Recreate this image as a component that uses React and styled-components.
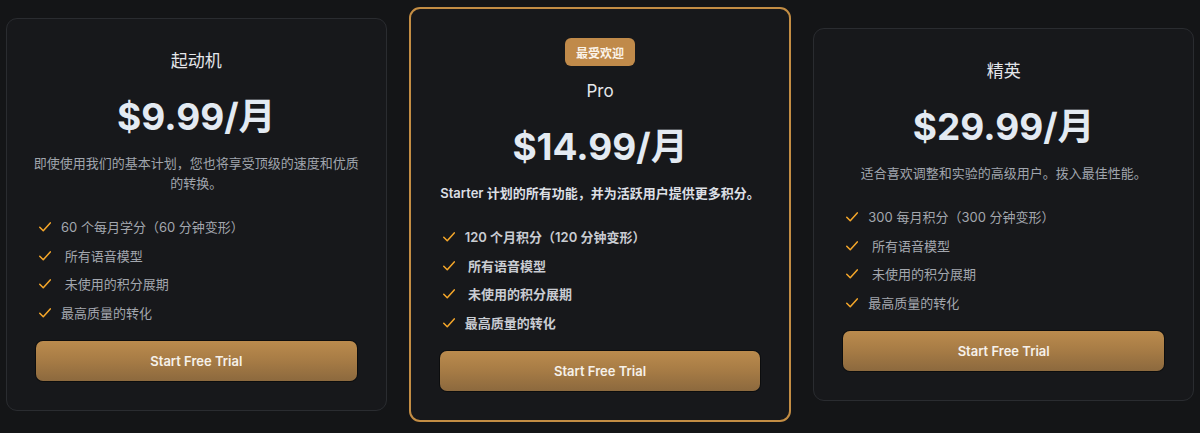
import React from "react";
import styled, { createGlobalStyle } from "styled-components";

const GlobalStyle = createGlobalStyle`
  html, body {
    margin: 0;
    padding: 0;
    background: #141517;
  }
  body {
    font-family: Inter, "Noto Sans CJK SC", sans-serif;
    -webkit-font-smoothing: antialiased;
  }
`;

const Page = styled.div`
  display: flex;
  align-items: center;
  gap: 22px;
  padding: 6px 6px 10px;
  height: 433px;
  box-sizing: border-box;
`;

const Card = styled.div`
  flex: 1;
  display: flex;
  flex-direction: column;
  align-items: center;
  box-sizing: border-box;
  padding: ${(p) => (p.featured ? "29px 29px 29px" : "30px 29px 29px")};
  background: #17181b;
  border: ${(p) => (p.featured ? "2px solid #c38d44" : "1px solid #2a2c30")};
  border-radius: 11px;
`;

const Badge = styled.span`
  display: inline-flex;
  align-items: center;
  justify-content: center;
  height: 28px;
  padding: 0 11px;
  margin-bottom: 13px;
  border-radius: 6px;
  background: #c08a4a;
  color: #fbf3e8;
  font-size: 12px;
  font-weight: 700;
`;

const Title = styled.h3`
  margin: 0 0 24px;
  font-size: 17px;
  line-height: 24px;
  font-weight: 400;
  color: #e4e6ea;
`;

const Price = styled.div`
  font-size: 37px;
  line-height: 40px;
  font-weight: 700;
  color: #e3eaf2;
`;

const Description = styled.p`
  margin: 16px -4px 24px;
  font-size: 13px;
  line-height: 20px;
  text-align: center;
  color: ${(p) => (p.featured ? "#dcdfe4" : "#a0a5ad")};
  font-weight: ${(p) => (p.featured ? 600 : 400)};
`;

const Features = styled.ul`
  list-style: none;
  margin: 0 0 18px;
  padding: 0 0 0 2px;
  align-self: stretch;
  display: flex;
  flex-direction: column;
  gap: 8.5px;
`;

const Feature = styled.li`
  display: flex;
  align-items: center;
  gap: 9px;
  font-size: 13px;
  line-height: 20px;
  color: ${(p) => (p.featured ? "#c9ccd2" : "#a3a7ae")};
  font-weight: ${(p) => (p.featured ? 600 : 400)};
  white-space: pre;
`;

const Button = styled.button`
  align-self: stretch;
  height: 40px;
  border: none;
  border-radius: 7px;
  background: linear-gradient(180deg, #bb8b4d 0%, #a67b45 50%, #8c693e 100%);
  box-shadow: 0 0 0 1px rgba(0, 0, 0, 0.45);
  color: #f6f1ea;
  font-family: Inter, sans-serif;
  font-size: 13px;
  font-weight: 600;
  cursor: pointer;
`;

const Check = () => (
  <svg width="14" height="14" viewBox="0 0 24 24" fill="none" stroke="#f4a62a" strokeWidth="2.6" strokeLinecap="round" strokeLinejoin="round">
    <path d="M3 12.5l6 6L21 5" />
  </svg>
);

const plans = [
  {
    title: "起动机",
    price: "$9.99/月",
    desc: "即使使用我们的基本计划，您也将享受顶级的速度和优质的转换。",
    features: ["60 个每月学分（60 分钟变形）", "\u00a0所有语音模型", "\u00a0未使用的积分展期", "最高质量的转化"],
  },
  {
    title: "Pro",
    price: "$14.99/月",
    badge: "最受欢迎",
    featured: true,
    desc: "Starter 计划的所有功能，并为活跃用户提供更多积分。",
    features: ["120 个月积分（120 分钟变形）", "\u00a0所有语音模型", "\u00a0未使用的积分展期", "最高质量的转化"],
  },
  {
    title: "精英",
    price: "$29.99/月",
    desc: "适合喜欢调整和实验的高级用户。拨入最佳性能。",
    features: ["300 每月积分（300 分钟变形）", "\u00a0所有语音模型", "\u00a0未使用的积分展期", "最高质量的转化"],
  },
];

export default function App() {
  return (
    <>
      <GlobalStyle />
      <Page>
        {plans.map((plan) => (
          <Card key={plan.title} featured={plan.featured}>
            {plan.badge && <Badge>{plan.badge}</Badge>}
            <Title>{plan.title}</Title>
            <Price>{plan.price}</Price>
            <Description featured={plan.featured}>{plan.desc}</Description>
            <Features>
              {plan.features.map((f) => (
                <Feature key={f} featured={plan.featured}>
                  <Check />
                  <span>{f}</span>
                </Feature>
              ))}
            </Features>
            <Button>Start Free Trial</Button>
          </Card>
        ))}
      </Page>
    </>
  );
}
